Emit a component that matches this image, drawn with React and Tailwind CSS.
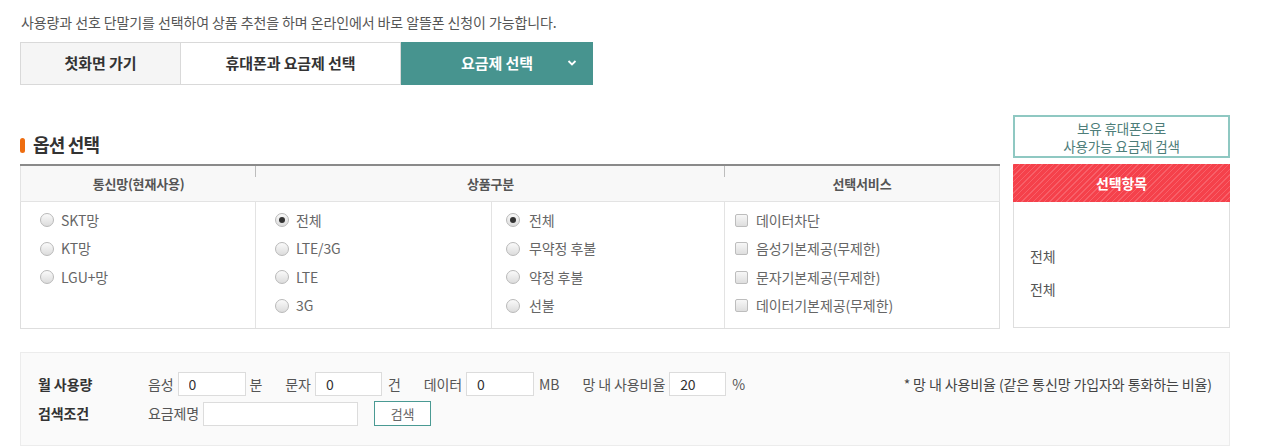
import React from 'react';

const FONT = "font-['Noto_Sans_CJK_KR','Noto_Sans',sans-serif]";

function Radio({ checked }) {
  return (
    <span className="w-[14px] h-[14px] rounded-full border border-[#b9b9b9] bg-gradient-to-b from-[#fafafa] to-[#dcdcdc] flex items-center justify-center shrink-0">
      {checked && <span className="w-[6px] h-[6px] rounded-full bg-[#333]" />}
    </span>
  );
}

function Check() {
  return (
    <span className="w-[13px] h-[13px] rounded-[2px] border border-[#bdbdbd] bg-gradient-to-b from-[#f7f7f7] to-[#dedede] shrink-0" />
  );
}

function Item({ type, checked, label, gap }) {
  return (
    <div className={`h-[28.5px] flex items-center ${gap}`}>
      {type === 'radio' ? <Radio checked={checked} /> : <Check />}
      <span className="text-[14px] text-[#666]">{label}</span>
    </div>
  );
}

const networks = ['SKT망', 'KT망', 'LGU+망'];
const tech = ['전체', 'LTE/3G', 'LTE', '3G'];
const kinds = ['전체', '무약정 후불', '약정 후불', '선불'];
const services = ['데이터차단', '음성기본제공(무제한)', '문자기본제공(무제한)', '데이터기본제공(무제한)'];

export default function App() {
  return (
    <div className={`${FONT} w-[1268px] h-[447px] bg-white pl-[20px] pt-[12px] tracking-[-0.1px] text-[#555]`}>
      <p className="text-[14px] leading-[20px] text-[#555] pl-[1px]">
        사용량과 선호 단말기를 선택하여 상품 추천을 하며 온라인에서 바로 알뜰폰 신청이 가능합니다.
      </p>

      <div className="mt-[10px] flex h-[43px] w-[573px]">
        <div className="w-[161px] border border-[#d9d9d9] bg-[#f5f5f5] flex items-center justify-center text-[15px] font-bold text-[#333]">
          첫화면 가기
        </div>
        <div className="w-[220px] border-y border-r border-[#d9d9d9] bg-white flex items-center justify-center text-[15px] font-bold text-[#333]">
          휴대폰과 요금제 선택
        </div>
        <div className="relative w-[192px] bg-[#47948f] flex items-center justify-center text-[15px] font-bold text-white">
          요금제 선택
          <svg className="absolute right-[16px] top-[17px]" width="10" height="8" viewBox="0 0 10 8">
            <path d="M1.5 2 L5 5.5 L8.5 2" fill="none" stroke="white" strokeWidth="1.8" />
          </svg>
        </div>
      </div>

      <div className="mt-[30px] flex gap-[13px]">
        <div className="w-[980px]">
          <div className="h-[49px] flex items-end pb-[9px]">
            <span className="w-[5px] h-[15px] rounded-[3px] bg-[#ee6d10] mr-[8px] mb-[2px]" />
            <h2 className="text-[18px] leading-[22px] font-bold text-[#333] tracking-[-0.8px]">옵션 선택</h2>
          </div>
          <div className="border-t-2 border-[#8a8a8a]">
            <div className="flex h-[36px] bg-[#f8f8f8] border-x border-b border-[#e3e3e3] text-[13px] font-bold text-[#555] tracking-[-0.2px]">
              <div className="w-[235px] relative flex items-center justify-center">
                통신망(현재사용)
                <span className="absolute right-0 top-0 w-px h-[11px] bg-[#bdbdbd]" />
              </div>
              <div className="w-[469px] relative flex items-center justify-center">
                상품구분
                <span className="absolute right-0 top-0 w-px h-[11px] bg-[#bdbdbd]" />
              </div>
              <div className="flex-1 flex items-center justify-center">선택서비스</div>
            </div>
            <div className="flex h-[127px] border-x border-b border-[#dedede]">
              <div className="w-[235px] border-r border-[#e3e3e3] pt-[4px] pl-[19px]">
                {networks.map((n) => (
                  <Item key={n} type="radio" label={n} gap="gap-[7px]" />
                ))}
              </div>
              <div className="w-[236px] border-r border-[#e3e3e3] pt-[4px] pl-[19px]">
                {tech.map((n, i) => (
                  <Item key={n} type="radio" checked={i === 0} label={n} gap="gap-[7px]" />
                ))}
              </div>
              <div className="w-[233px] border-r border-[#e3e3e3] pt-[4px] pl-[14px]">
                {kinds.map((n, i) => (
                  <Item key={n} type="radio" checked={i === 0} label={n} gap="gap-[9px]" />
                ))}
              </div>
              <div className="flex-1 pt-[4px] pl-[10px]">
                {services.map((n) => (
                  <Item key={n} type="check" label={n} gap="gap-[8px]" />
                ))}
              </div>
            </div>
          </div>
        </div>

        <div className="w-[217px]">
          <div className="h-[43px] border-2 border-[#8fc8c2] flex items-center justify-center">
            <p className="text-[13.5px] leading-[18px] text-[#4d7d79] text-center">
              보유 휴대폰으로
              <br />
              사용가능 요금제 검색
            </p>
          </div>
          <div className="mt-[6px] h-[38px] bg-[#f5414b] bg-[repeating-linear-gradient(-45deg,#f5414b_0px,#f5414b_3px,#f76069_3px,#f76069_4px)] flex items-center justify-center text-[14px] font-bold text-white">
            선택항목
          </div>
          <div className="h-[126px] border-x border-b border-[#dedede] pl-[16px] pt-[44px] text-[14px] text-[#555]">
            <div className="h-[20px] leading-[20px]">전체</div>
            <div className="h-[20px] leading-[20px] mt-[13px]">전체</div>
          </div>
        </div>
      </div>

      <div className="mt-[23px] w-[1210px] h-[94px] bg-[#fafafa] border border-[#ececec] pl-[17px] pr-[17px] pt-[19px] text-[14px] text-[#555]">
        <div className="flex items-center h-[24px]">
          <span className="w-[110px] font-bold text-[#333]">월 사용량</span>
          <span>음성</span>
          <input readOnly value="0" className="ml-[4px] w-[68px] h-[24px] border border-[#dcdcdc] bg-white px-[10px] text-[14px] text-[#333] outline-none" />
          <span className="ml-[4px]">분</span>
          <span className="ml-[23px]">문자</span>
          <input readOnly value="0" className="ml-[4px] w-[67px] h-[24px] border border-[#dcdcdc] bg-white px-[10px] text-[14px] text-[#333] outline-none" />
          <span className="ml-[6px]">건</span>
          <span className="ml-[23px]">데이터</span>
          <input readOnly value="0" className="ml-[4px] w-[68px] h-[24px] border border-[#dcdcdc] bg-white px-[10px] text-[14px] text-[#333] outline-none" />
          <span className="ml-[5px]">MB</span>
          <span className="ml-[23px]">망 내 사용비율</span>
          <input readOnly value="20" className="ml-[4px] w-[57px] h-[24px] border border-[#dcdcdc] bg-white px-[10px] text-[14px] text-[#333] outline-none" />
          <span className="ml-[6px]">%</span>
          <span className="ml-auto text-[#444]">* 망 내 사용비율 (같은 통신망 가입자와 통화하는 비율)</span>
        </div>
        <div className="flex items-center h-[25px] mt-[5px]">
          <span className="w-[110px] font-bold text-[#333]">검색조건</span>
          <span>요금제명</span>
          <input readOnly value="" className="ml-[4px] w-[155px] h-[24px] border border-[#dcdcdc] bg-white px-[8px] outline-none" />
          <button className="ml-[16px] w-[57px] h-[25px] border border-[#4a9a93] bg-white text-[13px] text-[#666]">
            검색
          </button>
        </div>
      </div>
    </div>
  );
}
